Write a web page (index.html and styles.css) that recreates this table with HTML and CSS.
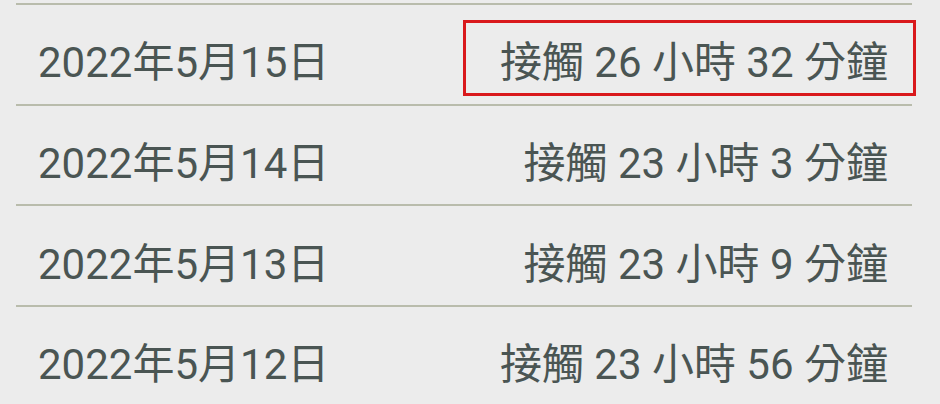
FILE: index.html
```html
<!DOCTYPE html>
<html lang="zh-Hant">
<head>
<meta charset="utf-8">
<link rel="stylesheet" href="styles.css">
</head>
<body>
<ul class="list">
  <li class="row">
    <span class="date">2022年5月15日</span>
    <span class="dur">接觸 26 小時 32 分鐘</span>
    <span class="mark"></span>
  </li>
  <li class="row">
    <span class="date">2022年5月14日</span>
    <span class="dur">接觸 23 小時 3 分鐘</span>
  </li>
  <li class="row">
    <span class="date">2022年5月13日</span>
    <span class="dur">接觸 23 小時 9 分鐘</span>
  </li>
  <li class="row">
    <span class="date">2022年5月12日</span>
    <span class="dur">接觸 23 小時 56 分鐘</span>
  </li>
</ul>
</body>
</html>
```
FILE: styles.css
```css
html, body {
  margin: 0;
  padding: 0;
  background: #ececec;
  height: 404px;
  overflow: hidden;
}
.list {
  list-style: none;
  margin: 3px 0 0 16px;
  padding: 0;
  width: 896px;
}
.row {
  position: relative;
  height: 100.7px;
  box-sizing: border-box;
  border-top: 2px solid #b9bcac;
  display: flex;
  align-items: center;
  justify-content: space-between;
  padding: 9px 24px 0 22px;
  font-family: Roboto, "Noto Sans CJK TC", sans-serif;
  font-size: 42px;
  color: #4a5553;
}
.mark {
  position: absolute;
  left: 447px;
  top: 15px;
  width: 453px;
  height: 76px;
  box-sizing: border-box;
  border: 3px solid #d9191c;
}
```
